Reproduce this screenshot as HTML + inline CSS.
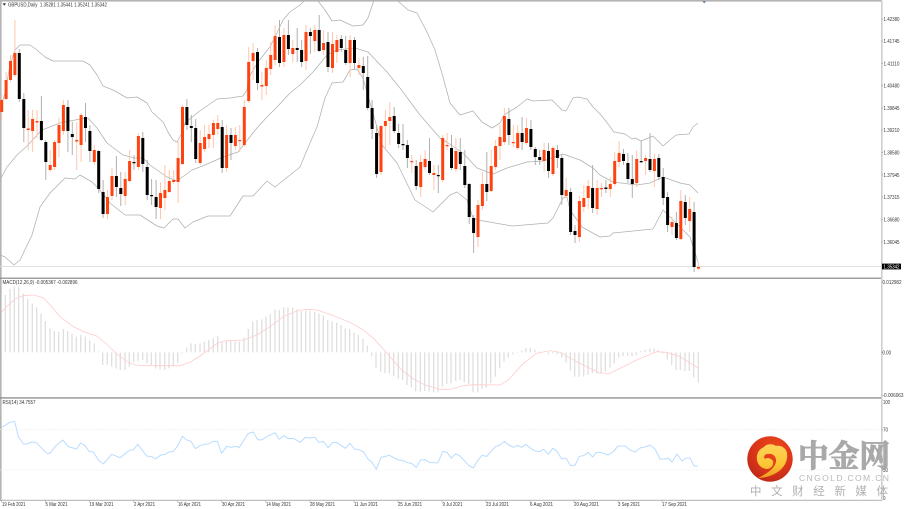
<!DOCTYPE html>
<html><head><meta charset="utf-8"><title>GBPUSD Daily</title>
<style>
html,body{margin:0;padding:0;background:#fff;width:904px;height:509px;overflow:hidden}
svg{display:block;position:absolute;left:0;top:0}
#c{filter:blur(.3px)}
#c text{font-family:"Liberation Sans",sans-serif;font-size:5px;fill:#333}
#l text{font-family:"Liberation Sans","Noto Sans CJK SC",sans-serif}
</style></head><body>
<svg id="c" width="904" height="509" viewBox="0 0 904 509">
<!-- frames -->
<rect x="0" y="0" width="881" height="1.6" fill="#b4b4b4"/>
<rect x="0" y="0" width="1.6" height="501" fill="#b4b4b4"/>
<rect x="881" y="0" width="1.6" height="501" fill="#cfcfcf"/>
<rect x="0" y="266" width="881" height=".9" fill="#dcdcdc"/>
<rect x="0" y="277.6" width="881" height="1.2" fill="#8a8a8a"/>
<rect x="0" y="397.3" width="881" height="1.3" fill="#8a8a8a"/>
<rect x="0" y="499.8" width="881" height="1" fill="#b0b0b0"/>
<path d="M702.5 1H706L704.2 3.5Z" fill="#5d80a5"/>
<path d="M0 429.4H881M0 470H881" stroke="#ececec" stroke-width=".8" stroke-dasharray="1.2 1.2" fill="none"/>

<!-- bollinger -->
<g fill="none" stroke="#b0b0b0" stroke-width=".75" stroke-linejoin="round">
<path d="M3 100L5 93L10 65L15 50L20 45L30 45L37 50L45 57L53 61L63 61L83 61L90 65L97 75L103 86L113 90L127 98L137 97L147 103L152 112L163 122L168 132L173 140L177 142L182 133L185 123L197 113L207 106L217 99L230 98L243 96L247 90L248 80L252 72L258 62L270 47L277 33L283 20L290 12L300 5L305 0"/>
<path d="M317 0L318 1L325 10L332 21L340 20L353 26L363 25L368 18L373 3L374 0"/>
<path d="M397 0L399 2L408 10L417 13L427 32L435 50L443 77L450 103L460 115L473 111L482 122L492 128L500 123L504 115L517 107L527 99L533 101L552 100L562 110L566 111L573 98L578 97L587 99L593 107L600 114L605 120L614 132L625 134L632 139L635 138L641 141L653 136L663 146L676 135L689 134L693 127L698 123"/>
<path d="M0 180L7 167L17 155L28 145L37 135L42 130L60 123L80 119L88 118L97 128L107 143L123 155L135 158L143 158L150 165L157 170L167 177L177 181L192 170L205 165L223 157L238 152L245 143L257 128L267 117L277 107L290 93L300 85L313 72L327 55L337 50L355 48L368 52L387 72L400 88L420 115L440 138L448 143L463 153L477 168L493 174L507 168L527 162L543 161L563 154L580 160L593 168L600 175L613 182L637 185L650 183L663 177L680 183L690 185L698 193"/>
<path d="M0 255L5 257L14 265L20 260L32 235L40 207L50 193L65 178L75 179L80 175L92 182L99 189L110 203L125 215L140 215L157 226L164 228L173 219L178 219L185 228L193 222L208 216L230 216L243 196L253 196L267 181L275 187L300 167L307 150L317 127L325 98L332 83L343 82L350 70L357 69L363 78L382 145L397 163L415 200L433 212L450 195L457 192L467 200L473 218L478 220L512 226L548 223L553 218L563 198L567 197L570 210L582 227L600 237L610 236L613 233L653 229L663 210L678 225L690 237L698 262"/>
</g>

<!-- orange wicks -->
<path fill="none" stroke="#ffc6ae" stroke-width="1" d="M1.7 95V120M6.1 72V100M10.5 55V82M14.9 20V77M28.2 110V150M32.6 110V152M37 110V138M50.2 150V172M54.6 140V170M59 118V157M63.4 100V135M76.7 122V170M81.1 113V162M94.3 145V165M107.5 190V219M112 168V200M125.2 172V205M129.6 150V182M138.4 133V170M160.5 182V219M164.9 165V210M169.3 170V193M173.7 170V184M178.1 140V203M182.5 105V165M200.2 130V165M204.6 125V152M209 125V148M213.4 120V148M217.8 115V135M226.6 125V172M235.4 127V150M239.8 125V152M244.3 100V147M248.7 47V103M253.1 43V80M261.9 72V100M266.3 60V95M270.7 42V75M275.1 25V65M283.9 28V67M292.8 40V62M306 25V70M314.8 25V52M323.6 30V55M332.5 32V73M336.9 35V63M350.1 35V77M358.9 58V75M381 125V175M385.4 110V150M389.8 102V145M411.8 155V173M420.7 155V197M425.1 150V170M433.9 165V190M442.7 135V182M447.1 133V150M455.9 138V172M478 200V247M482.4 172V210M491.2 150V192M495.6 140V170M500 125V160M504.4 108V145M513.3 125V147M517.7 125V150M526.5 118V145M544.1 143V172M553 146V176M566.2 178V198M579.4 196V242M583.8 185V212M588.2 180V209M597.1 180V215M601.5 183V197M610.3 177V197M614.7 152V186M619.1 141V167M636.7 150V187M645.6 155V175M654.4 154V187M672 217V235M680.8 190V240M689.7 197V232M698.5 262V270"/>
<!-- black wicks -->
<path fill="none" stroke="#b0b0b0" stroke-width="1" d="M19.3 49V102M23.8 93V142M41.4 96V141M45.8 140V180M67.9 100V152M72.3 122V155M85.5 103V142M89.9 125V162M98.7 150V193M103.1 180V218M116.4 156V197M120.8 172V206M134 155V170M142.8 132V172M147.2 160V200M151.6 179V205M156.1 180V219M186.9 99V130M191.3 115V142M195.7 119V163M222.2 120V173M231 128V160M257.5 48V90M279.5 20V67M288.4 20V55M297.2 28V62M301.6 40V67M310.4 28V54M319.2 15V52M328 32V72M341.3 35V52M345.7 36V65M354.5 37V70M363.3 57V90M367.7 56V110M372.1 100V139M376.6 125V178M394.2 107V133M398.6 124V148M403 124V150M407.4 140V168M416.2 160V190M429.5 138V175M438.3 165V193M451.5 135V170M460.3 138V170M464.8 150V188M469.2 183V224M473.6 215V253M486.8 152V201M508.9 108V145M522.1 117V150M530.9 120V150M535.3 147V165M539.7 150V165M548.5 143V178M557.4 145V168M561.8 155V205M570.6 188V235M575 225V243M592.6 165V213M605.9 180V193M623.5 149V165M627.9 153V183M632.3 155V198M641.2 141V163M650 133V172M658.8 154V180M663.2 168V205M667.6 192V232M676.4 212V240M685.3 195V225M694.1 202V272"/>

<!-- orange bodies -->
<path fill="none" stroke="#ff4310" stroke-width="3" d="M1.7 100V112M6.1 80V99M10.5 61V80M14.9 53V75M28.2 128.5V130M32.6 119V131M37 121V122.5M50.2 165V170M54.6 142V167M59 125V143M63.4 105V131M76.7 140V141.5M81.1 115V145M94.3 150V162M107.5 197V214M112 176V196M125.2 179V196M129.6 161V181M138.4 136V167M160.5 193V208M164.9 190V198M169.3 181V192M173.7 180V182M178.1 158V182M182.5 107V164M200.2 143V163M204.6 137V149M209 134V139M213.4 123V135M217.8 123V129M226.6 135V168M235.4 135V146M239.8 140V141.2M244.3 107V145M248.7 62V101M253.1 53V61M261.9 85V86.5M266.3 68V86M270.7 55V69M275.1 36V60M283.9 35V62M292.8 48V54M306 32V61M314.8 30V41M323.6 43V50M332.5 44V68M336.9 40V52M350.1 40V63M358.9 65V68M381 126V172M385.4 121V126M389.8 117V121M411.8 161V162.2M420.7 162V187M425.1 159V167M433.9 173V175M442.7 138V180M447.1 145V146.2M455.9 151V169M478 205V237M482.4 184V206M491.2 166V191M495.6 146V167M500 137V146M504.4 116V142M513.3 142V143.2M517.7 133V148M526.5 128V143M544.1 150V161M553 148V174M566.2 190V196M579.4 201V237M583.8 198V207M588.2 186V198M597.1 188V209M601.5 188V189.3M610.3 184V189M614.7 161V184M619.1 153V162M636.7 159V183M645.6 158V161M654.4 159V171M672 222V227M680.8 201V239M689.7 209V221M698.5 267V268.6"/>
<!-- black bodies -->
<path fill="none" stroke="#000" stroke-width="3" d="M19.3 53V99M23.8 99V128M41.4 121V140M45.8 142V162M67.9 107V131M72.3 134V137M85.5 117V128M89.9 131V151M98.7 151V189M103.1 192V214M116.4 176V187M120.8 188V194M134 162V163.2M142.8 138V164M147.2 167V195M151.6 195V196.2M156.1 197V207M186.9 107V125M191.3 126V128M195.7 128V159M222.2 127V168M231 135V143M257.5 52V83M279.5 37V63M288.4 35V49M297.2 48V50M301.6 50V62M310.4 32V36M319.2 30V51M328 42V67M341.3 39V48M345.7 50V63M354.5 40V63M363.3 66V73M367.7 77V108M372.1 108V129M376.6 133V174M394.2 116V131M398.6 133V144M403 144V145.2M407.4 145V158M416.2 166V186M429.5 161V173M438.3 175V176.2M451.5 148V168M460.3 152V164M464.8 166V185M469.2 184V217M473.6 218V233M486.8 184V192M508.9 119V135M522.1 133V142M530.9 129V147M535.3 149V157M539.7 157V160M548.5 151V171M557.4 150V158M561.8 158V195M570.6 192V232M575 231V235M592.6 188V208M605.9 187.5V189M623.5 154V161M627.9 163V179M632.3 179V184M641.2 161V162.3M650 159V170M658.8 158V177M663.2 177V198M667.6 197V225M676.4 223V238M685.3 202V218M694.1 212V267"/>

<!-- MACD -->
<g transform="translate(0,275) scale(.33333)" fill="none">
<path stroke="#e0e0e0" stroke-width="4" d="M16 232V60M30 232V42M43 232V34M56 232V35M70 232V56M83 232V72M97 232V85M110 232V97M123 232V116M136 232V138M150 232V160M163 232V168M176 232V170M190 232V162M203 232V168M216 232V177M229 232V185M242 232V180M256 232V185M269 232V196M283 232V205M296 232V229M308 232V270M322 232V270M335 232V275M348 232V280M361 232V285M375 232V285M388 232V275M401 232V262M414 232V258M428 232V255M441 232V265M454 232V270M467 232V280M480 232V283M494 232V284M507 232V280M520 232V275M533 232V265M546 232V235M560 232V217M573 232V205M586 232V207M600 232V205M613 232V200M626 232V195M640 232V190M653 232V183M666 232V200M679 232V198M692 232V198M705 232V200M718 232V200M732 232V187M745 232V162M758 232V140M771 232V135M785 232V133M798 232V125M811 232V117M825 232V103M838 232V105M851 232V97M864 232V97M878 232V98M891 232V103"/>
<path stroke="#ffcccc" stroke-width="2.4" d="M5 110L20 95L45 72L70 62L100 60L130 68L150 90L180 125L220 155L250 170L290 183L320 207L350 237L385 262L405 270L440 272L500 272L540 272L570 262L600 243L655 203L680 197L730 195L770 180L810 155L850 125L880 112L900 105"/>
<g transform="translate(900,0)">
<path stroke="#e0e0e0" stroke-width="4" d="M4 232V108M17 232V107M30 232V107M44 232V110M57 232V115M70 232V122M83 232V135M96 232V140M110 232V143M123 232V150M136 232V160M149 232V162M162 232V173M175 232V180M189 232V192M202 232V212M215 232V243M228 232V278M242 232V290M255 232V294M268 232V295M281 232V303M295 232V310M308 232V315M321 232V330M334 232V337M347 232V350M361 232V350M374 232V348M387 232V350M401 232V352M414 232V352M427 232V335M440 232V327M453 232V325M467 232V318M480 232V315M493 232V322M506 232V327M519 232V352M533 232V352M546 232V342M559 232V338M572 232V325M586 232V305M599 232V280M612 232V260M625 232V248M639 232V238M652 232V230M665 232V227M678 232V219M691 232V219M705 232V224M718 232V230M745 232V238M758 232V235M771 232V238M785 232V247M798 232V263M811 232V287M824 232V305M837 232V305M851 232V305M864 232V300M877 232V295M890 232V295"/>
<path stroke="#ffcccc" stroke-width="2.4" d="M0 105L30 103L55 106L100 122L150 142L190 165L220 190L260 233L300 280L340 312L375 330L420 343L450 343L490 332L520 329L600 330L625 315L670 265L710 235L750 227L780 232L830 260L900 295"/>
</g>
<g transform="translate(1800,0)">
<path stroke="#e0e0e0" stroke-width="4" d="M3 232V295M16 232V290M30 232V278M43 232V265M56 232V247M69 232V243M83 232V243M96 232V243M109 232V240M122 232V228M135 232V224M149 232V221M162 232V221M175 232V225M188 232V235M202 232V254M215 232V270M228 232V285M241 232V285M255 232V288M268 232V288M281 232V307M295 232V323"/>
<path stroke="#ffcccc" stroke-width="2.4" d="M0 293L25 297L50 285L110 255L170 230L200 232L240 245L295 280"/>
</g>
</g>

<!-- RSI -->
<g transform="translate(0,395) scale(.33333)" fill="none" stroke="#b9dcff" stroke-width="3" stroke-linejoin="round">
<path d="M5 97L30 82L44 79L55 125L70 147L82 147L95 141L108 142L140 175L150 175L165 155L188 135L205 155L230 162L242 144L255 152L268 170L280 171L295 195L310 207L335 178L360 188L390 165L400 165L413 148L440 183L455 185L467 192L482 180L495 178L507 171L520 169L533 153L547 124L560 135L573 139L586 161L600 152L613 148L626 147L640 139L652 139L665 175L680 154L693 157L706 154L718 157L745 115L760 111L773 134L785 135L800 125L825 113L838 133L851 122L865 131L880 130L900 142L916 127L930 129L944 127L957 142L970 139L984 158L997 143L1010 142L1036 160L1050 145L1063 162L1076 164L1090 170L1104 192L1116 202L1129 223L1143 187L1168 181L1195 195L1208 196L1222 203L1235 205L1249 217L1262 195L1275 194L1288 202L1314 204L1328 169L1341 172L1354 190L1367 176L1380 183L1407 212L1420 219L1433 197L1446 181L1460 184L1486 155L1500 150L1513 139L1526 150L1540 157L1553 151L1565 157L1578 148L1592 160L1605 168L1618 170L1631 163L1645 178L1658 160L1671 169L1685 192L1698 189L1711 211L1725 211L1738 184L1751 182L1764 172L1778 186L1790 172L1800 172L1824 180L1839 171L1854 153L1875 153L1890 165L1905 171L1920 159L1935 156L1950 150L1965 162L1980 192L1995 192L2004 189L2016 201L2031 177L2046 198L2058 189L2070 189L2082 213L2094 213"/>
</g>

<!-- titles -->
<path d="M2.6 3.4H6L4.3 5.6Z" fill="#222"/>
<text x="8" y="6.5" textLength="99" lengthAdjust="spacingAndGlyphs">GBPUSD,Daily&#160; 1.35281 1.35441 1.35241 1.35342</text>
<text x="2.5" y="284" textLength="75" lengthAdjust="spacingAndGlyphs">MACD(12,26,9) -0.005367 -0.002896</text>
<text x="2.5" y="404" textLength="33" lengthAdjust="spacingAndGlyphs">RSI(14) 34.7557</text>

<!-- price axis -->
<g>
<path d="M881.5 19H883M881.5 41H883M881.5 63.5H883M881.5 85.5H883M881.5 108H883M881.5 130H883M881.5 152.5H883M881.5 175H883M881.5 197H883M881.5 219.5H883M881.5 242H883M881.5 352.5H883M881.5 429.5H883M881.5 470H883" stroke="#888" stroke-width=".6"/>
<text x="883.5" y="20.8" textLength="16" lengthAdjust="spacingAndGlyphs">1.42380</text>
<text x="883.5" y="43" textLength="16" lengthAdjust="spacingAndGlyphs">1.41745</text>
<text x="883.5" y="65.3" textLength="16" lengthAdjust="spacingAndGlyphs">1.41110</text>
<text x="883.5" y="87.5" textLength="16" lengthAdjust="spacingAndGlyphs">1.40480</text>
<text x="883.5" y="109.8" textLength="16" lengthAdjust="spacingAndGlyphs">1.39845</text>
<text x="883.5" y="132" textLength="16" lengthAdjust="spacingAndGlyphs">1.39210</text>
<text x="883.5" y="154.3" textLength="16" lengthAdjust="spacingAndGlyphs">1.38580</text>
<text x="883.5" y="176.8" textLength="16" lengthAdjust="spacingAndGlyphs">1.37945</text>
<text x="883.5" y="199" textLength="16" lengthAdjust="spacingAndGlyphs">1.37315</text>
<text x="883.5" y="221.3" textLength="16" lengthAdjust="spacingAndGlyphs">1.36680</text>
<text x="883.5" y="243.8" textLength="16" lengthAdjust="spacingAndGlyphs">1.36045</text>
<rect x="882" y="263.6" width="19" height="5.8" fill="#000"/>
<text x="883.5" y="268.4" textLength="16" lengthAdjust="spacingAndGlyphs" style="fill:#fff">1.35342</text>
<text x="882.5" y="283.8" textLength="19" lengthAdjust="spacingAndGlyphs">0.012982</text>
<text x="882.5" y="354.3" textLength="8.5" lengthAdjust="spacingAndGlyphs">0.00</text>
<text x="882.5" y="396.8" textLength="21" lengthAdjust="spacingAndGlyphs">-0.006063</text>
<text x="883" y="403.8" textLength="7" lengthAdjust="spacingAndGlyphs">100</text>
<text x="883" y="431.3" textLength="5" lengthAdjust="spacingAndGlyphs">70</text>
<text x="883" y="471.8" textLength="5" lengthAdjust="spacingAndGlyphs">30</text>
<text x="883" y="499.8" textLength="2.5" lengthAdjust="spacingAndGlyphs">0</text>
</g>

<!-- date axis -->
<path d="M1.5 500V502.5M45.5 500V502.5M89.5 500V502.5M133.5 500V502.5M177.5 500V502.5M221.5 500V502.5M265.5 500V502.5M310 500V502.5M354 500V502.5M398 500V502.5M442 500V502.5M486 500V502.5M530 500V502.5M574 500V502.5M618 500V502.5M662 500V502.5" stroke="#999" stroke-width=".5"/>
<text x="2" y="506" textLength="23.5" lengthAdjust="spacingAndGlyphs">19 Feb 2021</text>
<text x="45.5" y="506" textLength="22" lengthAdjust="spacingAndGlyphs">5 Mar 2021</text>
<text x="89.5" y="506" textLength="24" lengthAdjust="spacingAndGlyphs">19 Mar 2021</text>
<text x="134" y="506" textLength="21" lengthAdjust="spacingAndGlyphs">2 Apr 2021</text>
<text x="178" y="506" textLength="23" lengthAdjust="spacingAndGlyphs">16 Apr 2021</text>
<text x="222" y="506" textLength="23" lengthAdjust="spacingAndGlyphs">30 Apr 2021</text>
<text x="266" y="506" textLength="25" lengthAdjust="spacingAndGlyphs">14 May 2021</text>
<text x="310" y="506" textLength="25" lengthAdjust="spacingAndGlyphs">28 May 2021</text>
<text x="354" y="506" textLength="24" lengthAdjust="spacingAndGlyphs">11 Jun 2021</text>
<text x="398" y="506" textLength="24" lengthAdjust="spacingAndGlyphs">25 Jun 2021</text>
<text x="442.5" y="506" textLength="20" lengthAdjust="spacingAndGlyphs">9 Jul 2021</text>
<text x="486" y="506" textLength="23" lengthAdjust="spacingAndGlyphs">23 Jul 2021</text>
<text x="530" y="506" textLength="23" lengthAdjust="spacingAndGlyphs">6 Aug 2021</text>
<text x="574" y="506" textLength="25" lengthAdjust="spacingAndGlyphs">20 Aug 2021</text>
<text x="618" y="506" textLength="22" lengthAdjust="spacingAndGlyphs">3 Sep 2021</text>
<text x="662" y="506" textLength="25" lengthAdjust="spacingAndGlyphs">17 Sep 2021</text>
</svg>

<!-- logo -->
<svg id="l" width="904" height="509" viewBox="0 0 904 509">
<defs>
<radialGradient id="rg" cx=".6" cy=".3" r=".8"><stop offset="0" stop-color="#ef4a18"/><stop offset=".6" stop-color="#d8341a"/><stop offset="1" stop-color="#b62618"/></radialGradient>
<linearGradient id="yg" x1="0" y1="0" x2="0" y2="1"><stop offset="0" stop-color="#ffd35a"/><stop offset=".6" stop-color="#fcc636"/><stop offset="1" stop-color="#ef9a22"/></linearGradient>
</defs>
<circle cx="770" cy="459" r="22.7" fill="url(#rg)"/>
<path d="M758 478C772 478 789 469 787 453C786 448 781 445 776 446C772 443 766 444 764 447C759 449 756 454 757 460C758 466 763 469 767 469C771 469 774 465 773 461C771 458 767 457 765 459C763 456 765 454 768 454C771 453 775 455 776 459C777 465 771 472 758 478Z" fill="url(#yg)"/>
<text x="798" y="467" font-size="31" font-weight="700" fill="#a9a9a9" stroke="#a9a9a9" stroke-width=".9" textLength="92" lengthAdjust="spacingAndGlyphs" style="font-family:'Noto Serif CJK SC','Noto Sans CJK SC',serif">中金网</text>
<text x="799" y="481" font-size="8.6" fill="#b8b8b8" textLength="90" lengthAdjust="spacing">CNGOLD.COM.CN</text>
<text x="750" y="495" font-size="11.5" fill="#b0b0b0" textLength="138" lengthAdjust="spacing">中文财经新媒体</text>
</svg>
</body></html>
